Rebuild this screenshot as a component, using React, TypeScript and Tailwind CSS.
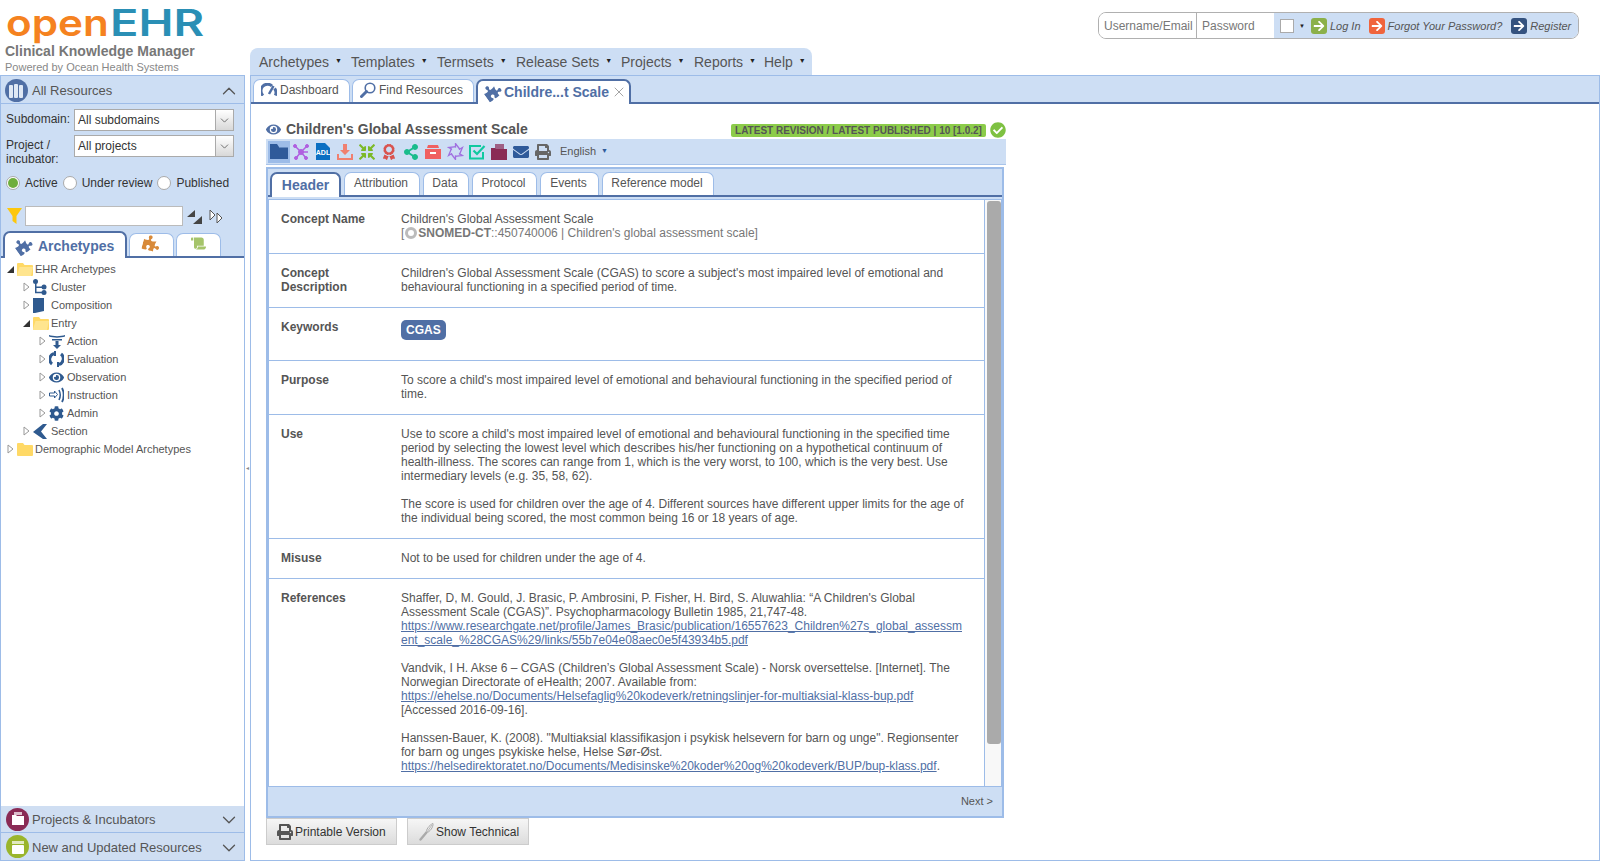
import React from 'react';
import { ChevronDown, ChevronUp, X } from 'lucide-react';
import {
  FaArrowRight,
  FaAward,
  FaCheckCircle,
  FaCog,
  FaCompressArrowsAlt,
  FaEnvelope,
  FaEye,
  FaPrint,
  FaPuzzlePiece,
  FaScroll,
  FaShareAlt,
} from 'react-icons/fa';

const Folder = ({ open = false }: { open?: boolean }) => (
  <svg width="16" height="14" viewBox="0 0 16 14" className="shrink-0">
    <path d="M0 2a1 1 0 0 1 1-1h5l1.500 2H15a1 1 0 0 1 1 1v9a1 1 0 0 1-1 1H1a1 1 0 0 1-1-1z" fill="#ffd966" />
    {open && <path d="M0 13 2.500 5H16l-2 9H1z" fill="#ffe58f" />}
  </svg>
);

const Expander = ({ open = false }: { open?: boolean }) =>
  open ? (
    <svg width="7" height="7" viewBox="0 0 7 7" className="shrink-0"><path d="M7 0v7H0z" fill="#333" /></svg>
  ) : (
    <svg width="7" height="10" viewBox="0 0 7 10" className="shrink-0"><path d="M1 1l5 4-5 4z" fill="#fff" stroke="#999" /></svg>
  );

const ClusterIcon = () => (
  <svg width="14" height="16" viewBox="0 0 14 16" fill="#2f5a8f">
    <circle cx="2.500" cy="2.500" r="2.500" /><circle cx="11" cy="8" r="2.500" /><circle cx="11" cy="13.500" r="2.500" />
    <path d="M2 3h1.500v4.500H9V9H3.500v3.800H9v1.500H2z" />
  </svg>
);
const CompositionIcon = () => (
  <svg width="11" height="15" viewBox="0 0 11 15"><path d="M0 0h11v13l-9 2H0z" fill="#2f5a8f" /></svg>
);
const ActionIcon = () => (
  <svg width="16" height="15" viewBox="0 0 16 15" fill="#2f5a8f">
    <path d="M0 1c4 1.500 12 1.500 16 0v1.500C12 4 4 4 0 2.500z" /><path d="M3 5h10v1.500H3z" /><path d="M6.500 7h3v4H12l-4 4-4-4h2.500z" />
  </svg>
);
const EvaluationIcon = () => (
  <svg width="15" height="16" viewBox="0 0 15 16" fill="none" stroke="#2f5a8f" strokeWidth="3">
    <path d="M5 2.500A6 6 0 0 0 3 13" /><path d="M10 13.500A6 6 0 0 0 12 3" />
    <path d="M6 0v5M9 11v5" strokeWidth="2" />
  </svg>
);
const InstructionIcon = () => (
  <svg width="15" height="16" viewBox="0 0 15 16" fill="none" stroke="#2f5a8f">
    <path d="M.5 6h5V4l3 3.500-3 3.500V9h-5z" />
    <path d="M10 3c1.500 3 1.500 7 0 10" strokeWidth="1.500" /><path d="M13 1c2.200 4 2.200 10 0 14" strokeWidth="1.800" />
  </svg>
);
const SectionIcon = () => (
  <svg width="14" height="15" viewBox="0 0 14 15"><path d="M10 0h4L8 7.500l6 7.500h-4L0 8z" fill="#2f5a8f" /></svg>
);

const GaugeIcon = () => (
  <svg width="16" height="13" viewBox="0 0 16 13" fill="none" className="ml-[7px] mr-[3px] shrink-0">
    <path d="M2 12.500A6.500 6.500 0 0 1 11 3" stroke="#506fa5" strokeWidth="3" />
    <path d="M13.500 5.500a6.500 6.500 0 0 1 .8 7" stroke="#506fa5" strokeWidth="3" />
    <path d="M12.500 3 8 11" stroke="#506fa5" strokeWidth="2.500" />
  </svg>
);

const SearchIcon = () => (
  <svg width="16" height="16" viewBox="0 0 16 16" fill="none" className="ml-[7px] mr-[3px] shrink-0">
    <circle cx="10" cy="6" r="4.800" stroke="#506fa5" strokeWidth="1.600" />
    <path d="M6.500 9.500 1.500 14.500" stroke="#506fa5" strokeWidth="3" strokeLinecap="round" />
  </svg>
);

const ShutterIcon = () => (
  <svg width="17" height="17" viewBox="0 0 17 17" fill="none" stroke="#a070e0" strokeWidth="1.300">
    {[0, 60, 120, 180, 240, 300].map((deg) => (
      <path key={deg} d="M8.500 4.500 L8.500 .5 L13 6.500" transform={`rotate(${deg} 8.500 8.500)`} />
    ))}
  </svg>
);

const CheckBoxIcon = () => (
  <svg width="17" height="16" viewBox="0 0 17 16" fill="none" stroke="#10c9a0">
    <path d="M14 8v6.500H1V2h11" strokeWidth="2" />
    <path d="M4.500 6.500 8 10l7.500-8" strokeWidth="2.200" />
  </svg>
);

const WhiskIcon = () => (
  <svg width="16" height="18" viewBox="0 0 16 18" fill="none" stroke="#aaa" className="mr-[1px] shrink-0">
    <path d="M1.500 16.500 7 10" strokeWidth="2.400" strokeLinecap="round" />
    <path d="M7 10c0-3 3-8 7-9.500C14.500 4 11 9 7 10z" strokeWidth="1" />
    <path d="M8 9 13 2" strokeWidth=".8" />
  </svg>
);

const TreeRow = ({
  indent,
  open,
  icon,
  label,
}: {
  indent: string;
  open?: boolean;
  icon: React.ReactNode;
  label: string;
}) => (
  <div className={`flex h-[18px] items-center ${indent}`}>
    <span className="flex w-[10px] shrink-0 justify-start"><Expander open={open} /></span>
    <span className="flex w-[18px] shrink-0 justify-start">{icon}</span>
    <span className="text-[11px] leading-none text-[#555]">{label}</span>
  </div>
);

const Radio = ({ checked = false, label }: { checked?: boolean; label: string }) => (
  <label className="flex items-center gap-[5px]">
    <span className="flex h-[14px] w-[14px] items-center justify-center rounded-full border border-[#aaa] bg-white">
      {checked && <span className="h-[10px] w-[10px] rounded-full bg-[#6fae3c]" />}
    </span>
    <span className="text-xs text-[#333]">{label}</span>
  </label>
);

const SelectBox = ({ value }: { value: string }) => (
  <div className="flex h-[22px] w-[160px] border border-[#aaa] bg-white">
    <span className="flex-1 pl-[3px] text-xs leading-[20px] text-[#333]">{value}</span>
    <span className="flex w-[18px] items-center justify-center border-l border-[#aaa] bg-gradient-to-b from-white to-[#d8d8d8]">
      <ChevronDown size={13} className="text-[#555]" strokeWidth={1.5} />
    </span>
  </div>
);

const Tab = ({ width, children }: { width: string; children: React.ReactNode }) => (
  <div className={`flex h-[23px] items-center rounded-t-[7px] border border-b-0 border-[#9dbce8] bg-white pb-[3px] text-xs text-[#555] ${width}`}>
    {children}
  </div>
);

const ActiveTab = ({ width, height, children }: { width: string; height: string; children: React.ReactNode }) => (
  <div className={`relative z-10 -mb-[2px] flex items-center rounded-t-[7px] border-2 border-b-0 border-[#506fa5] bg-white text-sm font-bold text-[#506fa5] ${width} ${height}`}>
    {children}
  </div>
);

const TB = ({ children, active = false }: { children: React.ReactNode; active?: boolean }) => (
  <span className={`flex h-[22px] w-[22px] items-center justify-center ${active ? 'bg-[#9dbce8]' : ''}`}>{children}</span>
);

const Row = ({ label, last = false, children }: { label: string; last?: boolean; children: React.ReactNode }) => (
  <div className={`flex pb-[13px] pl-[12px] pt-3 ${last ? '' : 'border-b border-[#9dbce8]'}`}>
    <div className="mr-[20px] w-[100px] shrink-0 text-xs font-bold leading-[14px] text-[#555]">{label}</div>
    <div className="w-[564px] text-xs leading-[14px] text-[#555]">{children}</div>
  </div>
);

const Lnk = ({ children }: { children: React.ReactNode }) => (
  <a href="#" className="break-all text-[#506fa5] underline">{children}</a>
);

const Accordion = ({ icon, bg, label }: { icon: React.ReactNode; bg: string; label: string }) => (
  <div className="flex h-[27px] items-center bg-[#cfdef2] pl-[5px] pr-[4px]">
    <span className={`flex h-[23px] w-[23px] items-center justify-center rounded-full ${bg}`}>{icon}</span>
    <span className="ml-[3px] flex-1 pt-[2px] text-[13px] text-[#555]">{label}</span>
    <ChevronDown size={22} strokeWidth={1.4} className="mt-[2px] text-[#555]" />
  </div>
);

const MenuItem = ({ label, width }: { label: string; width: string }) => (
  <div className={`flex items-center text-sm text-[#555] ${width}`}>
    {label}
    <span className="mb-[2px] ml-[6px] text-[7px] text-[#222]">▼</span>
  </div>
);

export default function App() {
  return (
    <div className="flex h-[861px] w-full flex-col overflow-hidden bg-white font-['Liberation_Sans',Arial,sans-serif]">
      {/* Header */}
      <header className="flex h-[75px] shrink-0">
        <div className="w-[250px] shrink-0 pl-[5px]">
          <div className="flex h-[43px] items-start pl-[1px] pt-[1px] font-['Inter',sans-serif] text-[37px] font-semibold leading-[43px]">
            <span className="w-[104px] origin-left scale-x-[1.14] text-[#f58220]">open</span>
            <span className="origin-left scale-x-[1.27] text-[#2a8fb5]">EHR</span>
          </div>
          <div className="text-sm font-bold leading-[16px] text-[#777]">Clinical Knowledge Manager</div>
          <div className="mt-[1px] text-[11px] leading-[14px] text-[#888]">Powered by Ocean Health Systems</div>
        </div>
        <nav className="mt-[48px] flex h-[27px] w-[562px] items-center rounded-t-[8px] bg-[#cddef4] pl-[9px]">
          <MenuItem label="Archetypes" width="w-[92px]" />
          <MenuItem label="Templates" width="w-[86px]" />
          <MenuItem label="Termsets" width="w-[79px]" />
          <MenuItem label="Release Sets" width="w-[105px]" />
          <MenuItem label="Projects" width="w-[73px]" />
          <MenuItem label="Reports" width="w-[70px]" />
          <MenuItem label="Help" width="w-[40px]" />
        </nav>
        <div className="ml-auto mr-[21px] mt-[12px] flex h-[27px] w-[481px] overflow-hidden rounded-[8px] border border-[#b0b0b0]">
          <input placeholder="Username/Email" className="w-[98px] border-r border-[#b0b0b0] bg-white pl-[5px] text-xs outline-none placeholder:text-[#777]" />
          <input placeholder="Password" className="w-[77px] bg-white pl-[5px] text-xs outline-none placeholder:text-[#777]" />
          <div className="flex flex-1 items-center bg-[#cddef4] pl-[6px] pt-[1px] text-[11px] italic text-[#555]">
            <span className="h-[14px] w-[14px] border border-[#aaa] bg-white" />
            <span className="ml-[5px] text-[6px] not-italic text-[#222]">▼</span>
            <span className="ml-[6px] flex h-[16px] w-[16px] items-center justify-center rounded-[3px] bg-[#8bb04a]"><FaArrowRight size={12} color="#fff" /></span>
            <span className="ml-[3px]">Log In</span>
            <span className="ml-[8px] flex h-[16px] w-[16px] items-center justify-center rounded-[3px] bg-[#f0643c]"><FaArrowRight size={12} color="#fff" /></span>
            <span className="ml-[3px]">Forgot Your Password?</span>
            <span className="ml-[9px] flex h-[16px] w-[16px] items-center justify-center rounded-[3px] bg-[#34527f]"><FaArrowRight size={12} color="#fff" /></span>
            <span className="ml-[3px]">Register</span>
          </div>
        </div>
      </header>

      <main className="flex min-h-0 flex-1">
        {/* Left panel */}
        <aside className="flex w-[245px] shrink-0 flex-col border border-[#9dbce8]">
          <div className="flex h-[28px] shrink-0 items-center border-b border-[#9dbce8] bg-[#cddef4] pl-[4px] pr-[4px] pt-[1px]">
            <span className="flex h-[23px] w-[23px] items-center justify-center rounded-full bg-[#506fa5]">
              <svg width="15" height="15" viewBox="0 0 15 15" fill="#dfe8f5"><rect x="0" y="2" width="4" height="13" rx="1" /><rect x="5" y="1" width="4" height="14" rx="1" /><rect x="10" y="2" width="4" height="13" rx="1" /></svg>
            </span>
            <span className="ml-[4px] flex-1 pt-[2px] text-[13px] text-[#555]">All Resources</span>
            <ChevronUp size={22} strokeWidth={1.4} className="mt-[2px] text-[#555]" />
          </div>
          <div className="shrink-0 bg-[#cddef4] pt-[5px]">
            <div className="flex pl-[5px]">
              <span className="w-[68px] text-xs leading-[20px] text-[#333]">Subdomain:</span>
              <SelectBox value="All subdomains" />
            </div>
            <div className="mt-[4px] flex pl-[5px]">
              <span className="w-[68px] pt-[3px] text-xs leading-[14px] text-[#333]">Project / incubator:</span>
              <SelectBox value="All projects" />
            </div>
            <div className="mt-[9px] flex items-center gap-[5px] pl-[5px]">
              <Radio checked label="Active" />
              <Radio label="Under review" />
              <Radio label="Published" />
            </div>
            <div className="mt-[15px] flex items-center pl-[6px]">
              <svg width="15" height="16" viewBox="0 0 15 16"><path d="M0 0h15L9.500 8v8l-4-3V8z" fill="#fdc70c" /></svg>
              <span className="ml-[3px] h-[20px] w-[158px] border border-[#bbb] bg-white" />
              <svg width="15" height="15" viewBox="0 0 15 15" className="ml-[4px]"><path d="M0 8 8 1v7zM6 15 15 7v8z" fill="#444" /></svg>
              <svg width="15" height="15" viewBox="0 0 15 15" className="ml-[7px]"><path d="M1 1l5 5-5 5zM8 4l5 5-5 5z" fill="#fff" stroke="#555" /></svg>
            </div>
            <div className="mt-[5px] flex h-[27px] items-end gap-[2px] border-b-2 border-[#506fa5] pl-[2px]">
              <ActiveTab width="w-[124px]" height="h-[27px]">
                <FaPuzzlePiece size={17} className="ml-[10px] mr-[6px] -rotate-[35deg] text-[#506fa5]" />
                Archetypes
              </ActiveTab>
              <Tab width="w-[45px] justify-center"><FaPuzzlePiece size={17} className="rotate-[15deg] text-[#d88a3a]" /></Tab>
              <Tab width="w-[45px] justify-center"><FaScroll size={15} className="text-[#a5c46a]" /></Tab>
            </div>
          </div>
          <div className="min-h-0 flex-1 bg-white pt-[2px]">
            <TreeRow indent="pl-[6px]" open icon={<Folder open />} label="EHR Archetypes" />
            <TreeRow indent="pl-[22px]" icon={<ClusterIcon />} label="Cluster" />
            <TreeRow indent="pl-[22px]" icon={<CompositionIcon />} label="Composition" />
            <TreeRow indent="pl-[22px]" open icon={<Folder open />} label="Entry" />
            <TreeRow indent="pl-[38px]" icon={<ActionIcon />} label="Action" />
            <TreeRow indent="pl-[38px]" icon={<EvaluationIcon />} label="Evaluation" />
            <TreeRow indent="pl-[38px]" icon={<FaEye size={15} color="#2f5a8f" />} label="Observation" />
            <TreeRow indent="pl-[38px]" icon={<InstructionIcon />} label="Instruction" />
            <TreeRow indent="pl-[38px]" icon={<FaCog size={15} color="#2f5a8f" />} label="Admin" />
            <TreeRow indent="pl-[22px]" icon={<SectionIcon />} label="Section" />
            <TreeRow indent="pl-[6px]" icon={<Folder />} label="Demographic Model Archetypes" />
          </div>
          <div className="shrink-0 divide-y divide-[#9dbce8]">
            <Accordion bg="bg-[#8a2b55]" label="Projects & Incubators" icon={<svg width="14" height="14" viewBox="0 0 14 14" fill="#fff"><path d="M3 0h8v3H3z" opacity=".7" /><path d="M1 3h4l1 1h7v9H1z" /></svg>} />
            <Accordion bg="bg-[#9ab52c]" label="New and Updated Resources" icon={<svg width="14" height="14" viewBox="0 0 14 14" fill="#fff"><path d="M1 1h12v3H1z" opacity=".7" /><rect x="1" y="5" width="12" height="9" rx="1" /></svg>} />
          </div>
        </aside>

        {/* Splitter */}
        <div className="flex w-[5px] shrink-0 items-center justify-center bg-white">
          <span className="text-[6px] text-[#888]">◂</span>
        </div>

        {/* Right panel */}
        <section className="flex min-w-0 flex-1 flex-col border border-[#9dbce8]">
          <div className="flex h-[28px] shrink-0 items-end gap-[2px] border-b-2 border-[#506fa5] bg-[#cddef4] pl-[2px]">
            <Tab width="w-[97px]"><GaugeIcon />Dashboard</Tab>
            <Tab width="w-[122px]"><SearchIcon />Find Resources</Tab>
            <ActiveTab width="w-[155px] pb-[2px]" height="h-[25px]">
              <FaPuzzlePiece size={17} className="ml-[6px] mr-[3px] -rotate-[35deg]" />
              Childre...t Scale
              <X size={16} strokeWidth={1} className="ml-[2px] text-[#777]" />
            </ActiveTab>
          </div>

          <div className="min-h-0 flex-1 bg-white pl-[15px]">
            <div className="flex h-[35px] w-[740px] items-end pb-[1px]">
              <FaEye size={15} className="mb-[1px] text-[#506fa5]" />
              <span className="ml-[5px] flex-1 text-sm font-bold leading-[18px] text-[#555]">Children&apos;s Global Assessment Scale</span>
              <span className="mb-[1px] flex h-[13px] w-[255px] items-center justify-center rounded-[2px] bg-[#8ccc4a] text-[10px] font-bold text-[#555]">
                LATEST REVISION / LATEST PUBLISHED | 10 [1.0.2]
              </span>
              <FaCheckCircle size={16} className="ml-[4px] text-[#7ec142]" />
            </div>

            <div className="flex h-[26px] w-[740px] items-center border-b border-[#a9c4ea] bg-[#cddef4] pl-[2px]">
              <TB active>
                <svg width="18" height="15" viewBox="0 0 18 15"><path d="M0 0h7l2 3h9v12H0z" fill="#2f5a9a" /><path d="M9 2h9v1.500H9z" fill="#9dbce8" /></svg>
              </TB>
              <TB>
                <svg width="16" height="16" viewBox="0 0 16 16" fill="#b060e0" stroke="#b060e0"><path d="M2 2l6 6 6-6M8 8l-5 6M8 8l5 6M8 8h7" fill="none" strokeWidth="1.500" /><circle cx="2" cy="2" r="1.500" /><circle cx="14" cy="2" r="1.500" /><circle cx="8" cy="8" r="2.500" /><circle cx="3" cy="14" r="1.500" /><circle cx="13" cy="14" r="1.500" /></svg>
              </TB>
              <TB>
                <svg width="16" height="17" viewBox="0 0 16 17"><path d="M1 0h9l5 5v12H1z" fill="#0b6fc2" /><text x="8" y="12" textAnchor="middle" fontSize="7" fontWeight="700" fill="#fff" fontFamily="Liberation Sans">ADL</text></svg>
              </TB>
              <TB>
                <svg width="16" height="16" viewBox="0 0 16 16" fill="#f08070"><path d="M6 0h4v6h3l-5 5-5-5h3z" /><path d="M0 10h2v4h12v-4h2v6H0z" /></svg>
              </TB>
              <TB><FaCompressArrowsAlt size={16} color="#7cb928" /></TB>
              <TB><FaAward size={16} color="#d9534f" /></TB>
              <TB><FaShareAlt size={16} color="#1abc8c" /></TB>
              <TB>
                <svg width="16" height="14" viewBox="0 0 16 14" fill="#f06060"><path d="M3 0h10l1 3H2z" /><path d="M0 4h16v10H0z" /><rect x="5" y="7" width="6" height="2" fill="#fff" /></svg>
              </TB>
              <TB><ShutterIcon /></TB>
              <TB><CheckBoxIcon /></TB>
              <TB>
                <svg width="16" height="16" viewBox="0 0 16 16" fill="#8a2b55"><path d="M4 0h9v5H4z" opacity=".7" /><path d="M0 4h4l1 1h11v11H0z" /></svg>
              </TB>
              <TB><FaEnvelope size={16} color="#2f5a9a" /></TB>
              <TB><FaPrint size={16} color="#666" /></TB>
              <span className="ml-[6px] text-[11px] text-[#555]">English</span>
              <span className="ml-[5px] text-[7px] text-[#2f5a9a]">▼</span>
            </div>

            <div className="mt-[2px] flex h-[651px] w-[738px] flex-col border-2 border-[#9dbce8] bg-[#cddef4]">
              <div className="flex h-[28px] shrink-0 items-end gap-[3px] border-b-2 border-[#506fa5] pl-[2px]">
                <ActiveTab width="w-[71px] justify-center pb-[2px]" height="h-[25px]">Header</ActiveTab>
                <Tab width="w-[76px] justify-center pr-[2px]">Attribution</Tab>
                <Tab width="w-[46px] justify-center pr-[2px]">Data</Tab>
                <Tab width="w-[65px] justify-center pr-[2px]">Protocol</Tab>
                <Tab width="w-[59px] justify-center pr-[2px]">Events</Tab>
                <Tab width="w-[112px] justify-center pr-[2px]">Reference model</Tab>
              </div>
              <div className="mt-[2px] flex min-h-0 flex-1 border border-[#9dbce8] bg-white">
                <div className="min-w-0 flex-1 overflow-hidden border-r border-[#9dbce8]">
                  <Row label="Concept Name">
                    <div>Children&apos;s Global Assessment Scale</div>
                    <div className="flex items-center text-[#777]">
                      [<span className="mx-[1px] inline-block h-[12px] w-[12px] rounded-full border-[3px] border-[#bbb]" />
                      <b>SNOMED-CT</b>::450740006 | Children&apos;s global assessment scale]
                    </div>
                  </Row>
                  <Row label="Concept Description">
                    Children&apos;s Global Assessment Scale (CGAS) to score a subject&apos;s most impaired level of emotional and behavioural functioning in a specified period of time.
                  </Row>
                  <div className="flex h-[53px] border-b border-[#9dbce8] pl-[12px] pt-3">
                    <div className="w-[120px] shrink-0 text-xs font-bold leading-[14px] text-[#555]">Keywords</div>
                    <span className="h-[20px] rounded-[5px] bg-[#506fa5] px-[5px] text-xs font-bold leading-[20px] text-white">CGAS</span>
                  </div>
                  <Row label="Purpose">
                    To score a child&apos;s most impaired level of emotional and behavioural functioning in the specified period of time.
                  </Row>
                  <Row label="Use">
                    <p>Use to score a child&apos;s most impaired level of emotional and behavioural functioning in the specified time period by selecting the lowest level which describes his/her functioning on a hypothetical continuum of health-illness. The scores can range from 1, which is the very worst, to 100, which is the very best. Use intermediary levels (e.g. 35, 58, 62).</p>
                    <p className="mt-[14px]">The score is used for children over the age of 4. Different sources have different upper limits for the age of the individual being scored, the most common being 16 or 18 years of age.</p>
                  </Row>
                  <Row label="Misuse">Not to be used for children under the age of 4.</Row>
                  <Row label="References" last>
                    <p>
                      Shaffer, D, M. Gould, J. Brasic, P. Ambrosini, P. Fisher, H. Bird, S. Aluwahlia: “A Children&apos;s Global Assessment Scale (CGAS)”. Psychopharmacology Bulletin 1985, 21,747-48.
                      <br />
                      <Lnk>https://www.researchgate.net/profile/James_Brasic/publication/16557623_Children%27s_global_assessment_scale_%28CGAS%29/links/55b7e04e08aec0e5f43934b5.pdf</Lnk>
                    </p>
                    <p className="mt-[14px]">
                      Vandvik, I H. Akse 6 – CGAS (Children’s Global Assessment Scale) - Norsk oversettelse. [Internet]. The Norwegian Directorate of eHealth; 2007. Available from:
                      <br />
                      <Lnk>https://ehelse.no/Documents/Helsefaglig%20kodeverk/retningslinjer-for-multiaksial-klass-bup.pdf</Lnk>
                      <br />
                      [Accessed 2016-09-16].
                    </p>
                    <p className="mt-[14px]">
                      Hanssen-Bauer, K. (2008). &quot;Multiaksial klassifikasjon i psykisk helsevern for barn og unge&quot;. Regionsenter for barn og unges psykiske helse, Helse Sør-Øst.
                      <br />
                      <Lnk>https://helsedirektoratet.no/Documents/Medisinske%20koder%20og%20kodeverk/BUP/bup-klass.pdf</Lnk>.
                    </p>
                  </Row>
                </div>
                <div className="w-[16px] shrink-0 bg-[#f8f8f8] pl-[2px] pt-[1px]">
                  <div className="h-[543px] w-[14px] rounded-[3px] bg-[#aaa]" />
                </div>
              </div>
              <div className="flex h-[29px] shrink-0 items-center justify-end pr-[9px] text-[11px] text-[#555]">Next &gt;</div>
            </div>

            <div className="flex gap-[10px]">
              <button className="flex h-[27px] w-[131px] items-center border border-[#ccc] bg-gradient-to-b from-[#f6f6f6] to-[#dcdcdc] pl-[10px] text-xs text-[#333]">
                <FaPrint size={16} className="mr-[2px] text-[#555]" />Printable Version
              </button>
              <button className="flex h-[27px] w-[122px] items-center border border-[#ccc] bg-gradient-to-b from-[#f6f6f6] to-[#dcdcdc] pl-[11px] text-xs text-[#333]">
                <WhiskIcon />Show Technical
              </button>
            </div>
          </div>
        </section>
      </main>
    </div>
  );
}
